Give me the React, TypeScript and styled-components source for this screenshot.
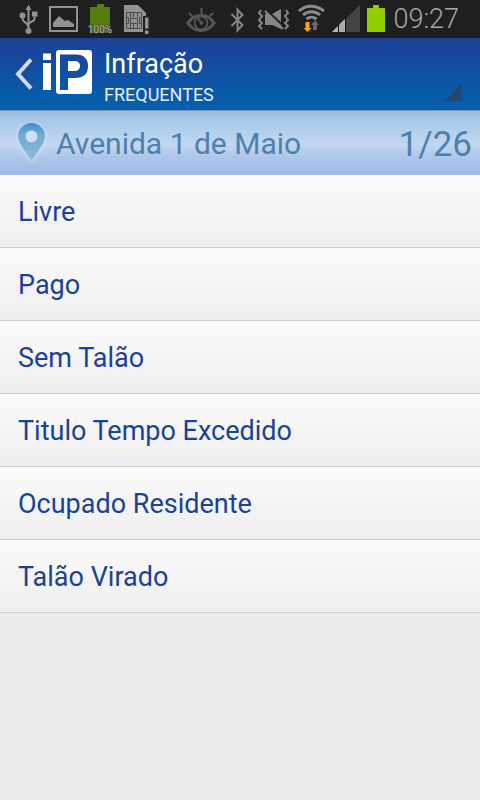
import React from "react";
import styled, { createGlobalStyle } from "styled-components";

const GlobalStyle = createGlobalStyle`
  * { box-sizing: border-box; }
  body { margin: 0; background: #ececec; }
  body, button { font-family: Roboto, "Noto Sans", sans-serif; }
`;

const Screen = styled.div`
  min-height: 100vh;
  display: flex;
  flex-direction: column;
  background: #ececec;
`;

const StatusBar = styled.div`
  height: 38px;
  padding: 0 21px 0 18px;
  display: flex;
  justify-content: space-between;
  background: #1f1f1f;
`;

const StatusGroup = styled.div<{ $gap: number }>`
  display: flex;
  gap: ${({ $gap }) => $gap}px;
`;

const Icon = styled.svg`
  display: block;
  flex: none;
`;

const Clock = styled.time`
  font-size: 27px;
  line-height: 38px;
  font-weight: 300;
  color: #a6a6a6;
`;

const Header = styled.header`
  height: 72px;
  display: flex;
  align-items: stretch;
  background: linear-gradient(#1c4098, #0461af);
`;

const BackButton = styled.button`
  border: 0;
  padding: 0;
  width: 104px;
  background: none;
  cursor: pointer;
`;

const TitleButton = styled.button`
  flex: 1;
  min-width: 0;
  border: 0;
  padding: 10px 18px 0 0;
  display: flex;
  align-items: flex-start;
  justify-content: space-between;
  background: none;
  color: #fff;
  text-align: left;
  cursor: pointer;
`;

const Titles = styled.span`
  display: flex;
  flex-direction: column;
`;

const Title = styled.span`
  font-size: 27px;
  line-height: 32px;
`;

const Subtitle = styled.span`
  font-size: 18px;
  line-height: 30px;
  color: #e8eef7;
`;

const LocationBar = styled.section`
  height: 65px;
  padding: 0 8px 0 16px;
  display: flex;
  align-items: center;
  border-top: 1px solid #7197bd;
  background: linear-gradient(#98bedd 0%, #a9cbe9 18%, #c2d6f0 52%, #adc7eb 72%, #9dbbe6 100%);
  color: #4c80ae;
`;

const Street = styled.h1`
  flex: 1;
  margin: 0;
  padding: 2px 0 0 8px;
  font-size: 30px;
  font-weight: 400;
  line-height: 36px;
`;

const Counter = styled.span`
  padding-top: 4px;
  font-size: 35px;
  line-height: 44px;
`;

const List = styled.ul`
  margin: 0;
  padding: 0;
  list-style: none;
`;

const Row = styled.li`
  border-bottom: 1px solid #cfcfcf;
`;

const RowButton = styled.button`
  width: 100%;
  height: 72px;
  border: 0;
  padding: 2px 18px 0;
  background: linear-gradient(#fbfbfb, #eee);
  color: #1a4298;
  font-size: 27px;
  line-height: 32px;
  text-align: left;
  cursor: pointer;
`;

const gray = "#929292";

const UsbIcon = () => (
  <Icon width="22" height="38" viewBox="18 0 22 38" fill={gray} stroke={gray} aria-hidden="true">
    <path d="M28.5 4.500L31.500 10h-6z" stroke="none" />
    <path d="M28.500 8v23M22.500 16v3c0 3 6 4 6 8M34.500 14v5c0 3-6 2-6 6" fill="none" strokeWidth="2" />
    <circle cx="22.500" cy="15.500" r="3" stroke="none" />
    <circle cx="28.500" cy="31" r="3" stroke="none" />
    <path d="M32 11.500h5.500v5H32z" stroke="none" />
  </Icon>
);

const PictureIcon = () => (
  <Icon width="29" height="38" viewBox="49 0 29 38" aria-hidden="true">
    <rect x="50" y="7" width="27" height="24" fill="none" stroke={gray} strokeWidth="2" />
    <path d="M53 27v-4l6-7 6 5 3-1 6 4v3z" fill={gray} />
  </Icon>
);

const ChargedIcon = () => (
  <Icon width="28" height="38" viewBox="87 0 28 38" role="img" aria-label="100%">
    <path d="M97 4h7v3h6v26H90V7h7z" fill="#587c0c" />
    <text x="100" y="33" textAnchor="middle" fontFamily="Roboto, sans-serif" fontWeight="500" fontSize="10" fill="#aaa" stroke="#333" strokeWidth="1" paintOrder="stroke">100%</text>
  </Icon>
);

const SimIcon = () => (
  <Icon width="27" height="38" viewBox="124 0 27 38" aria-hidden="true">
    <path d="M124 5h14l8 8v3h-3v16h-19z" fill={gray} />
    <path d="M126.500 12.500h15v16h-15z" fill="none" stroke="#4a4a4a" />
    <path d="M130.500 12.500v5m3-5v5m4-5v5m-7 6v5m3-5v5m4-5v5M126.500 17.500h2v6h-2m15-6h-2v6h2M130.500 18.500h7v5h-7z" fill="none" stroke="#4a4a4a" />
    <path d="M143.500 16h6v18h-6z" fill="#1f1f1f" />
    <path d="M145 17.500h3.500v11H145zm0 13h3.500V34H145z" fill={gray} />
  </Icon>
);

const EyeIcon = () => (
  <Icon width="30" height="38" viewBox="187 0 30 38" aria-hidden="true">
    <path fillRule="evenodd" d="M187 23c8-12 22-12 30 0-8 12-22 12-30 0zm4 0c2 3 4 4.500 6 5.500-3-3-3-8 0-11-2 1-4 3-6 5.500zm22 0c-2-3-4-4.500-6-5.500 3 3 3 8 0 11 2-1 4-3 6-5.500zm-11-5.500a5.500 5.500 0 1 0 0 11 5.500 5.500 0 0 0 0-11z" fill="#555" />
    <path d="M190 13l4 4M202.500 8v6M214 13l-4 4M198 18l5 5" stroke="#555" strokeWidth="2" />
    <circle cx="202.500" cy="23" r="2" fill="#555" />
  </Icon>
);

const BluetoothIcon = () => (
  <Icon width="14" height="38" viewBox="231 0 14 38" fill="none" stroke="#858585" strokeWidth="2" aria-hidden="true">
    <path d="M232.500 14l11 11-5 5.500V9.500l5 5.500-11 11" />
  </Icon>
);

const MuteIcon = () => (
  <Icon width="32" height="38" viewBox="259 0 32 38" aria-hidden="true">
    <path d="M266 14h7l9-5v20l-9-4h-7z" fill="#858585" />
    <path d="M266 8.500l19 18" stroke="#1f1f1f" strokeWidth="2" />
    <path d="M266 11l18 18M262 10l-2 3 3 3-3 4 3 3-3 3 3 3M287 10l2 3-3 3 3 4-3 3 3 3-3 3" stroke="#858585" strokeWidth="2" fill="none" />
  </Icon>
);

const WifiIcon = () => (
  <Icon width="27" height="38" viewBox="297 0 27 38" aria-hidden="true">
    <path d="M298 11c7-6.500 17-6.500 25 0M302 15c5-4.500 12-4.500 17 0M305.500 19c3-2.500 7-2.500 10 0" fill="none" stroke="#8b8b8b" strokeWidth="3" />
    <path d="M312 30h4v-5h2l-4-5-4 5h2z" fill="#666" />
    <path d="M304.500 22h4v6h2l-4 4-4-4h2z" fill="#ffa31d" />
  </Icon>
);

const SignalIcon = () => (
  <Icon width="28" height="38" viewBox="332 0 28 38" aria-hidden="true">
    <path d="M332 32l28-27v27z" fill="#444" />
    <path d="M332 32l13-13v13z" fill="#b5b5b5" />
    <path d="M338.500 25v7M345.500 18v14" stroke="#111" strokeWidth="1" />
    <path d="M340 24l4-4v12h-4z" fill="#aaa" />
  </Icon>
);

const BatteryIcon = () => (
  <Icon width="18" height="38" viewBox="367 0 18 38" aria-hidden="true">
    <path d="M373 5h6v3h6v24h-18V8h6z" fill="#91cf00" />
  </Icon>
);

const BrandIcon = () => (
  <Icon width="104" height="72" viewBox="0 38 104 72" aria-hidden="true">
    <path d="M31 59.500L18 74l13 14.500" fill="none" stroke="#d0daec" strokeWidth="4" />
    <path d="M43 53.500h8V60h-8zM43 63h8v27h-8z" fill="#fff" />
    <path fillRule="evenodd" d="M59 50h30q3 0 3 3v38q0 3-3 3H59q-3 0-3-3V53q0-3 3-3zM60 54.500V90h8V78h7c9 0 13-4 13-12 0-7-4-11.500-12-11.500zM68 61h6q6 0 6 5t-6 5h-6z" fill="#fff" />
  </Icon>
);

const SpinnerMark = () => (
  <Icon width="18" height="18" viewBox="0 0 18 18" aria-hidden="true">
    <path d="M18 0v18H0z" fill="#24486f" />
  </Icon>
);

const SpinnerSlot = styled.span`
  padding-top: 35px;
`;

const PinIcon = () => (
  <Icon width="32" height="46" viewBox="16 120 32 46" aria-hidden="true">
    <defs>
      <linearGradient id="pin" x1="0" y1="0" x2="0" y2="1">
        <stop offset="0" stopColor="#3e8ec7" />
        <stop offset=".3" stopColor="#6fabd0" />
        <stop offset="1" stopColor="#8dbce0" />
      </linearGradient>
      <filter id="glow" x="-30%" y="-30%" width="160%" height="160%">
        <feDropShadow dx="0" dy="1" stdDeviation="2" floodColor="#d9eaf8" />
      </filter>
    </defs>
    <path filter="url(#glow)" fill="url(#pin)" d="M31.500 123C24 123 18 129 18 136c0 8 8 16 13.500 25C37 152 45 144 45 136c0-7-6-13-13.500-13z" />
    <circle cx="31.500" cy="136.500" r="6" fill="#cfe0f4" />
  </Icon>
);

const reasons = [
  "Livre",
  "Pago",
  "Sem Talão",
  "Titulo Tempo Excedido",
  "Ocupado Residente",
  "Talão Virado",
];

export default function App() {
  return (
    <Screen>
      <GlobalStyle />
      <StatusBar>
        <StatusGroup $gap={9}>
          <UsbIcon />
          <PictureIcon />
          <ChargedIcon />
          <SimIcon />
        </StatusGroup>
        <StatusGroup $gap={8}>
          <StatusGroup $gap={14}>
            <EyeIcon />
            <BluetoothIcon />
            <MuteIcon />
          </StatusGroup>
          <StatusGroup $gap={7}>
            <WifiIcon />
            <SignalIcon />
            <BatteryIcon />
          </StatusGroup>
          <Clock>09:27</Clock>
        </StatusGroup>
      </StatusBar>
      <Header>
        <BackButton type="button" aria-label="Voltar">
          <BrandIcon />
        </BackButton>
        <TitleButton type="button" aria-haspopup="listbox">
          <Titles>
            <Title>Infração</Title>
            <Subtitle>FREQUENTES</Subtitle>
          </Titles>
          <SpinnerSlot>
            <SpinnerMark />
          </SpinnerSlot>
        </TitleButton>
      </Header>
      <LocationBar>
        <PinIcon />
        <Street>Avenida 1 de Maio</Street>
        <Counter>1/26</Counter>
      </LocationBar>
      <List>
        {reasons.map((reason) => (
          <Row key={reason}>
            <RowButton type="button">{reason}</RowButton>
          </Row>
        ))}
      </List>
    </Screen>
  );
}
